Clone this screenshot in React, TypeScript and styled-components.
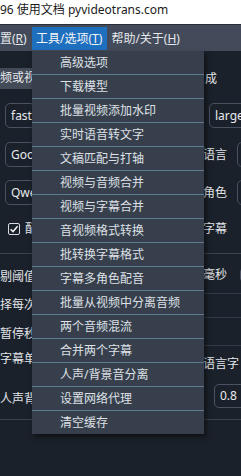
import React from 'react'
import styled, { createGlobalStyle } from 'styled-components'

const toolItems = [
  '高级选项',
  '下载模型',
  '批量视频添加水印',
  '实时语音转文字',
  '文稿匹配与打轴',
  '视频与音频合并',
  '视频与字幕合并',
  '音视频格式转换',
  '批转换字幕格式',
  '字幕多角色配音',
  '批量从视频中分离音频',
  '两个音频混流',
  '合并两个字幕',
  '人声/背景音分离',
  '设置网络代理',
  '清空缓存',
];

const GlobalStyle = createGlobalStyle`
  html, body {
    margin: 0;
    padding: 0;
    background: #1b212a;
    overflow: hidden;
  }
  * {
    box-sizing: border-box;
  }
`;

export default function App() {
  return (
    <>
      <GlobalStyle />
      <Window>
        <TitleBar>96 使用文档 pyvideotrans.com</TitleBar>

        <MenuBar>
          <MenuTitle $first>置(<u>R</u>)</MenuTitle>
          <MenuAnchor>
            <MenuTitle $active>工具/选项(<u>T</u>)</MenuTitle>
            <Dropdown>
              {toolItems.map((label, i) => (
                <DropItem key={label} $divider={i > 0}>{label}</DropItem>
              ))}
            </Dropdown>
          </MenuAnchor>
          <MenuTitle>帮助/关于(<u>H</u>)</MenuTitle>
        </MenuBar>

        <Body>
          <Row $h={21} $mt={17}>
            <SourceButton>频或视频</SourceButton>
            <SideText $pad={2}>成</SideText>
          </Row>

          <Row $h={25} $mt={14}>
            <Field $ml={5} $w={30}>faster</Field>
            <Field $ml={6} $w={60}>large-v2</Field>
          </Row>

          <Row $h={25} $mt={14}>
            <Field $ml={5} $w={30}>Google</Field>
            <Pair>
              <SideText>语言</SideText>
              <Field $w={20} />
            </Pair>
          </Row>

          <Row $h={25} $mt={13}>
            <Field $ml={5} $w={30}>Qwen</Field>
            <Pair>
              <SideText>角色</SideText>
              <Field $w={20} />
            </Pair>
          </Row>

          <Row $h={24} $mt={12}>
            <CheckLine>
              <CheckBox>
                <svg width="10" height="10" viewBox="0 0 10 10">
                  <path d="M1.6 5.2 L4 7.6 L8.6 2.2" fill="none" stroke="#f2f2f2" strokeWidth="1.5" />
                </svg>
              </CheckBox>
              <SideText>配</SideText>
            </CheckLine>
            <SideText>字幕</SideText>
          </Row>

          <Divider $mt={12} />

          <Split>
            <Column>
              <SideText $mt={15}>剔阈值</SideText>
              <SideText $mt={12}>择每次</SideText>
              <SideText $mt={13}>暂停秒</SideText>
              <SideText $mt={9}>字幕单</SideText>
              <SideText $mt={24}>人声背</SideText>
            </Column>
            <Column>
              <Pair $mt={13}>
                <SideText>毫秒</SideText>
                <Field $w={20} $h={16} $gap={3} />
              </Pair>
              <FaintLine $mt={10} />
              <FaintLine $mt={23} />
              <FaintLine $mt={27} />
              <SideText $mt={10}>语言字</SideText>
              <Field $ml={11} $w={40} $h={24} $mt={12}>0.8</Field>
            </Column>
          </Split>

          <Divider $mt={0} />
        </Body>
      </Window>
    </>
  );
}

const Window = styled.div`
  width: 241px;
  height: 476px;
  display: flex;
  flex-direction: column;
  background: #1b212a;
  font-family: "Noto Sans", "Noto Sans CJK SC", sans-serif;
  font-size: 12px;
  color: #dfe2e6;
`;

const TitleBar = styled.div`
  height: 25px;
  flex: 0 0 25px;
  background: #ffffff;
  color: #1a1a1a;
  border-bottom: 1px solid #2a2f37;
  line-height: 20px;
  white-space: nowrap;
`;

const MenuBar = styled.div`
  display: flex;
  align-items: flex-end;
  height: 26px;
  flex: 0 0 26px;
  background: #434b5a;
  padding-bottom: 1px;
  position: relative;
  z-index: 5;
`;

const MenuAnchor = styled.div`
  position: relative;
`;

interface MenuTitleProps {
  $active?: boolean;
  $first?: boolean;
}

const MenuTitle = styled.div<MenuTitleProps>`
  height: 23px;
  line-height: 23px;
  padding: 0 ${p => p.$first ? 0 : 5}px 0 ${p => p.$first ? 0 : 4}px;
  width: ${p => p.$first ? '32px' : 'auto'};
  white-space: nowrap;
  color: ${p => p.$active ? '#f4f6f8' : '#e3e6ea'};
  background: ${p => p.$active ? '#1f6fbf' : 'transparent'};
  u {
    text-decoration: underline;
    text-underline-offset: 1px;
  }
`;

const Dropdown = styled.div`
  position: absolute;
  top: 100%;
  left: 0;
  width: 172px;
  margin-top: 1px;
  background: #383f4c;
  box-shadow: 2px 3px 5px rgba(0, 0, 0, 0.5);
  display: flex;
  flex-direction: column;
`;

const DropItem = styled.div<{ $divider: boolean }>`
  height: ${p => p.$divider ? 24 : 23}px;
  line-height: 23px;
  padding-left: 28px;
  color: #dde1e6;
  white-space: nowrap;
  border-top: ${p => p.$divider ? '1px solid #5e7a91' : 'none'};
`;

const Body = styled.div`
  flex: 1;
  display: flex;
  flex-direction: column;
  overflow: hidden;
`;

interface RowProps {
  $h: number;
  $mt: number;
}

const Row = styled.div<RowProps>`
  display: grid;
  grid-template-columns: 203px 38px;
  align-items: center;
  height: ${p => p.$h}px;
  margin-top: ${p => p.$mt}px;
  white-space: nowrap;
`;

const SourceButton = styled.div`
  height: 21px;
  width: 36px;
  line-height: 19px;
  background: #434a58;
  color: #e6e8eb;
  overflow: hidden;
  white-space: nowrap;
`;

interface SideTextProps {
  $pad?: number;
  $mt?: number;
}

const SideText = styled.div<SideTextProps>`
  line-height: 16px;
  height: 16px;
  padding-left: ${p => p.$pad || 0}px;
  margin-top: ${p => p.$mt || 0}px;
  color: #e2e5e9;
  white-space: nowrap;
`;

interface FieldProps {
  $ml?: number;
  $mt?: number;
  $w: number;
  $h?: number;
  $gap?: number;
}

const Field = styled.div<FieldProps>`
  flex: 0 0 auto;
  margin-left: ${p => (p.$ml || 0) + (p.$gap || 0)}px;
  margin-top: ${p => p.$mt || 0}px;
  width: ${p => p.$w}px;
  height: ${p => p.$h || 25}px;
  line-height: ${p => (p.$h || 25) - 2}px;
  border: 1px solid #4a5262;
  border-radius: 5px;
  padding-left: 5px;
  color: #e8eaed;
  white-space: nowrap;
  overflow: hidden;
`;

const Pair = styled.div<{ $mt?: number }>`
  display: flex;
  align-items: center;
  gap: 10px;
  margin-top: ${p => p.$mt || 0}px;
  white-space: nowrap;
`;

const CheckLine = styled.div`
  display: flex;
  align-items: center;
  gap: 5px;
  padding-left: 8px;
`;

const CheckBox = styled.span`
  width: 12px;
  height: 12px;
  border: 1px solid #d8dbe0;
  border-radius: 2px;
  display: inline-flex;
  align-items: center;
  justify-content: center;
  background: #1b212a;
`;

const Divider = styled.div<{ $mt: number }>`
  height: 1px;
  flex: 0 0 1px;
  margin-top: ${p => p.$mt}px;
  background: #3a424e;
`;

const Split = styled.div`
  display: grid;
  grid-template-columns: 203px 38px;
  height: 165px;
  flex: 0 0 165px;
  overflow: hidden;
`;

const Column = styled.div`
  display: flex;
  flex-direction: column;
  align-items: flex-start;
  min-width: 0;
`;

const FaintLine = styled.div<{ $mt: number }>`
  align-self: stretch;
  height: 1px;
  margin-top: ${p => p.$mt}px;
  background: #323946;
`;
